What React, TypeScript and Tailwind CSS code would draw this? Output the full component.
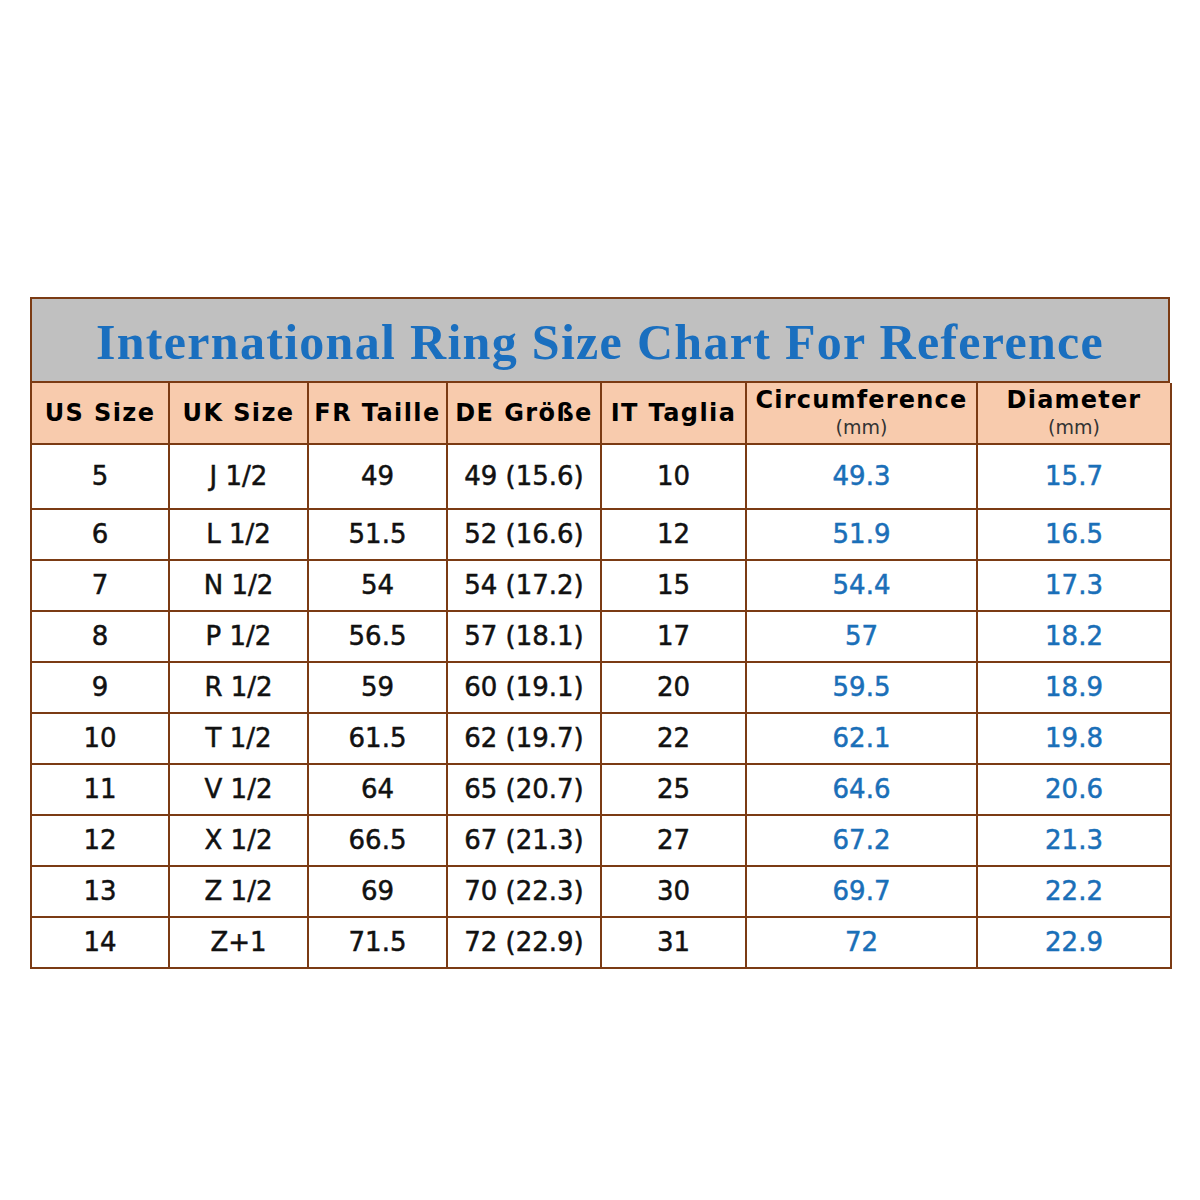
const HEAD = ['US Size', 'UK Size', 'FR Taille', 'DE Größe', 'IT Taglia']

const ROWS: string[][] = [
  ['5', 'J 1/2', '49', '49 (15.6)', '10', '49.3', '15.7'],
  ['6', 'L 1/2', '51.5', '52 (16.6)', '12', '51.9', '16.5'],
  ['7', 'N 1/2', '54', '54 (17.2)', '15', '54.4', '17.3'],
  ['8', 'P 1/2', '56.5', '57 (18.1)', '17', '57', '18.2'],
  ['9', 'R 1/2', '59', '60 (19.1)', '20', '59.5', '18.9'],
  ['10', 'T 1/2', '61.5', '62 (19.7)', '22', '62.1', '19.8'],
  ['11', 'V 1/2', '64', '65 (20.7)', '25', '64.6', '20.6'],
  ['12', 'X 1/2', '66.5', '67 (21.3)', '27', '67.2', '21.3'],
  ['13', 'Z 1/2', '69', '70 (22.3)', '30', '69.7', '22.2'],
  ['14', 'Z+1', '71.5', '72 (22.9)', '31', '72', '22.9'],
]

const cols = 'grid grid-cols-[138px_139px_139px_154px_145px_231px_194px]'

export default function App() {
  return (
    <div className="w-[1200px] h-[1200px] bg-white pt-[297px] pl-[30px]">
      <div className="w-[1140px] border-l-2 border-t-2 border-[#7b3b14] font-['DejaVu_Sans',sans-serif] text-black">
        {/* title band */}
        <div className="h-[84px] bg-[#c0c0c0] border-r-2 border-b-2 border-[#7b3b14] flex items-center justify-center">
          <h1 className="font-['Liberation_Serif',serif] font-bold text-[50px] text-[#1a6fbf] tracking-[1.3px] pt-1 whitespace-nowrap">
            International Ring Size Chart For Reference
          </h1>
        </div>

        {/* header row */}
        <div className={`${cols} h-[62px] bg-[#f8cbad]`}>
          {HEAD.map(h => (
            <div key={h} className="border-r-2 border-b-2 border-[#7b3b14] flex items-center justify-center font-bold text-[24px] tracking-[1.4px] whitespace-nowrap">
              {h}
            </div>
          ))}
          {['Circumference', 'Diameter'].map(h => (
            <div key={h} className="border-r-2 border-b-2 border-[#7b3b14] flex flex-col items-center justify-start pt-[2px]">
              <span className="font-bold text-[24px] tracking-[1.2px] leading-[30px]">{h}</span>
              <span className="text-[19px] leading-[24px] text-[#333]">(mm)</span>
            </div>
          ))}
        </div>

        {/* body */}
        {ROWS.map((r, i) => (
          <div key={r[0]} className={`${cols} ${i === 0 ? 'h-[65px]' : 'h-[51px]'}`}>
            {r.map((v, j) => (
              <div
                key={j}
                className={`border-r-2 border-b-2 border-[#7b3b14] flex items-center justify-center text-[26px] whitespace-nowrap [-webkit-text-stroke:0.5px_currentColor] ${j > 4 ? 'text-[#1a6fb8]' : 'text-[#111]'}`}
              >
                {v}
              </div>
            ))}
          </div>
        ))}
      </div>
    </div>
  )
}
